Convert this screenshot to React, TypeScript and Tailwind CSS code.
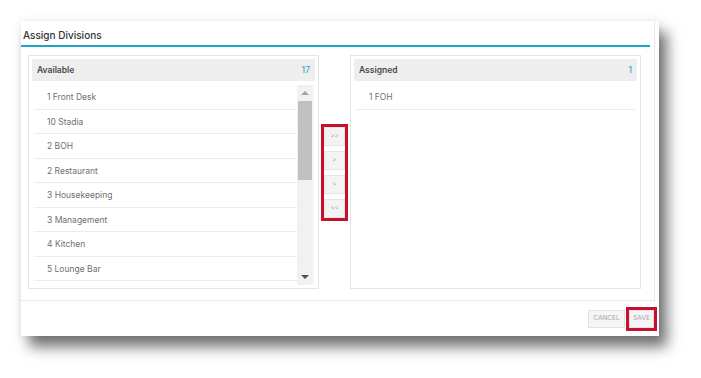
import { ReactNode } from "react";

const available = [
  "1 Front Desk",
  "10 Stadia",
  "2 BOH",
  "2 Restaurant",
  "3 Housekeeping",
  "3 Management",
  "4 Kitchen",
  "5 Lounge Bar",
];

const assigned = ["1 FOH"];

function Panel({ title, count, children }: { title: string; count: number; children: ReactNode }) {
  return (
    <div className="w-[291px] h-[234px] border border-[#e4e4e4] p-[3px] flex flex-col">
      <div className="h-[22px] bg-[#eeeeee] flex items-center justify-between px-[5px] shrink-0">
        <span className="text-[8.5px] font-semibold text-[#4a4a4a]">{title}</span>
        <span className="text-[8.5px] font-medium text-[#3aa5c8]">{count}</span>
      </div>
      {children}
    </div>
  );
}

function Row({ label }: { label: string }) {
  return (
    <div className="h-[24.5px] border-b border-[#ececec] flex items-center pt-[2px] pl-[13px] text-[8.5px] text-[#707070]">
      {label}
    </div>
  );
}

export default function App() {
  return (
    <div className="w-[701px] h-[378px] bg-white pt-[21px] pl-[21px] font-['Inter',sans-serif]">
      <div className="w-[638px] h-[315px] bg-white flex flex-col shadow-[8px_11px_13px_rgba(0,0,0,0.55),0_0_8px_rgba(0,0,0,0.08)]">
        <div className="w-[634px] border-r border-[#e8e8e8] border-b flex flex-col">
          {/* Header */}
          <div className="h-[26px] w-[629px] border-b-2 border-[#1ea3c9] flex items-center pt-[4px] pl-[2px] shrink-0">
            <span className="text-[10px] font-medium text-[#333]">Assign Divisions</span>
          </div>

          {/* Body */}
          <div className="h-[253px] pt-[8px] pl-[7px] flex items-start">
            <Panel title="Available" count={17}>
              <div className="flex mt-[4px] h-[200px]">
                <div className="flex-1 pl-[2px]">
                  {available.map((name) => (
                    <Row key={name} label={name} />
                  ))}
                </div>
                <div className="w-[16px] bg-[#f1f1f1] flex flex-col items-center">
                  <div className="h-[16px] flex items-center justify-center">
                    <div className="w-0 h-0 border-l-[4px] border-r-[4px] border-b-[4px] border-l-transparent border-r-transparent border-b-[#a3a3a3]" />
                  </div>
                  <div className="w-[14px] h-[79px] bg-[#c1c1c1]" />
                  <div className="flex-1" />
                  <div className="h-[16px] flex items-center justify-center">
                    <div className="w-0 h-0 border-l-[4px] border-r-[4px] border-t-[4px] border-l-transparent border-r-transparent border-t-[#505050]" />
                  </div>
                </div>
                <div className="w-[2px]" />
              </div>
            </Panel>

            <div className="w-[31px] h-[234px] flex items-center justify-center">
              <div className="flex flex-col gap-[5px] outline-[3px] outline-solid outline-[#c8102e]">
                {[">>", ">", "<", "<<"].map((b) => (
                  <button
                    key={b}
                    className="w-[21px] h-[19px] bg-[#f3f3f3] border border-[#e6e6e6] text-[6px] text-[#a8a8a8] flex items-center justify-center leading-none"
                  >
                    {b}
                  </button>
                ))}
              </div>
            </div>

            <Panel title="Assigned" count={1}>
              <div className="mt-[4px] px-[2px]">
                {assigned.map((name) => (
                  <Row key={name} label={name} />
                ))}
              </div>
            </Panel>
          </div>
        </div>

        {/* Footer */}
        <div className="flex-1 flex items-center justify-end gap-[4px] pr-[5px]">
          <button className="w-[37px] h-[18px] bg-[#f5f5f5] border border-[#e2e2e2] text-[6.5px] text-[#a5a5a5] uppercase">
            Cancel
          </button>
          <button className="w-[25px] h-[18px] bg-[#f5f5f5] border border-[#e2e2e2] text-[6.5px] text-[#a5a5a5] uppercase outline-[3px] outline-solid outline-[#c8102e]">
            Save
          </button>
        </div>
      </div>
    </div>
  );
}
